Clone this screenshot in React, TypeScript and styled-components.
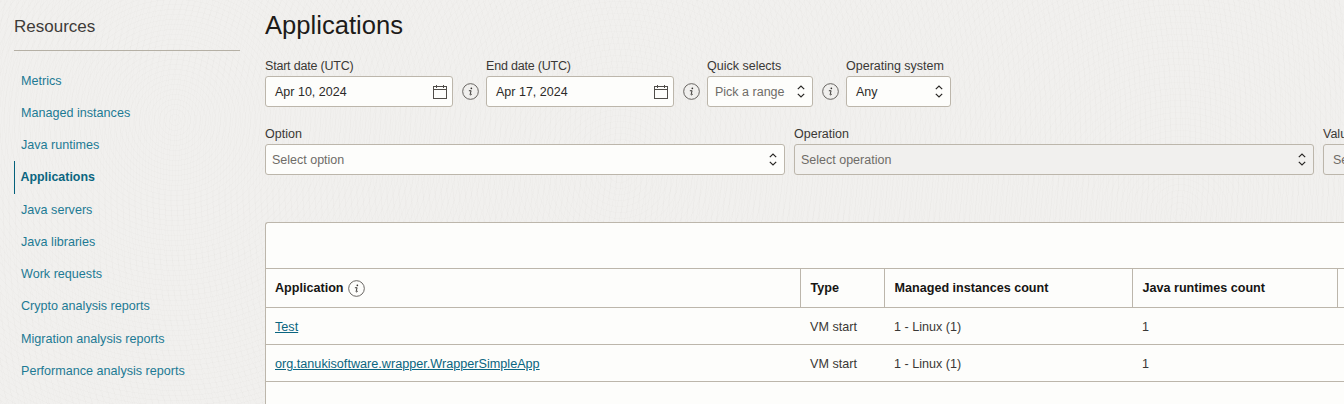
import React from 'react';
import styled, { createGlobalStyle } from 'styled-components';

const GlobalStyle = createGlobalStyle`
  html, body {
    margin: 0;
    padding: 0;
    width: 1344px;
    height: 404px;
    overflow: hidden;
    background: #f1f0ee;
    font-family: "Liberation Sans", Arial, sans-serif;
    color: #161513;
  }
  * { box-sizing: border-box; }
`;

const Page = styled.div`
  display: flex;
  width: 1344px;
  height: 404px;
  overflow: hidden;
  background-color: #f1f0ee;
  background-image:
    repeating-radial-gradient(circle at 175px 120px, rgba(120, 110, 100, 0.018) 0 1px, transparent 1px 5px),
    repeating-radial-gradient(circle at 620px 170px, rgba(120, 110, 100, 0.014) 0 1px, transparent 1px 6px),
    repeating-radial-gradient(circle at 1180px 215px, rgba(120, 110, 100, 0.014) 0 1px, transparent 1px 6px);
`;

const Sidebar = styled.aside`
  flex: 0 0 226px;
  margin-left: 14px;
`;

const SideTitle = styled.h2`
  margin: 0;
  height: 51px;
  padding-top: 16px;
  border-bottom: 1px solid #b5b0a5;
  font-size: 17px;
  line-height: 21px;
  font-weight: 400;
  color: #3d3b38;
`;

const SideNav = styled.nav`
  display: flex;
  flex-direction: column;
  margin-top: 13.5px;
`;

const SideLink = styled.a<{ $active?: boolean }>`
  display: flex;
  align-items: center;
  height: 32.25px;
  padding-left: ${(p) => (p.$active ? '5.5px' : '7px')};
  border-left: ${(p) => (p.$active ? '1.5px solid #04617b' : 'none')};
  font-size: ${(p) => (p.$active ? '12.4px' : '12.6px')};
  font-weight: ${(p) => (p.$active ? 700 : 400)};
  color: ${(p) => (p.$active ? '#0a6580' : '#1d7a94')};
`;

const Main = styled.main`
  flex: 0 0 auto;
  width: 1200px;
  margin-left: 25px;
`;

const PageTitle = styled.h1`
  margin: 0;
  padding-top: 11px;
  font-size: 25.6px;
  line-height: 28px;
  font-weight: 400;
  color: #1d1b19;
`;

const FilterRow = styled.div<{ $top: number }>`
  display: flex;
  align-items: flex-end;
  margin-top: ${(p) => p.$top}px;
`;

const Field = styled.div<{ $width: number; $gap?: number }>`
  flex: 0 0 ${(p) => p.$width}px;
  margin-right: ${(p) => p.$gap ?? 0}px;
`;

const Label = styled.label<{ $tight?: boolean }>`
  display: block;
  height: 17px;
  font-size: 12.5px;
  line-height: 14px;
  letter-spacing: ${(p) => (p.$tight ? '-0.2px' : '0')};
  color: #3a3835;
  white-space: nowrap;
`;

const Control = styled.div<{ $disabled?: boolean; $pad?: number; $right?: number }>`
  display: flex;
  align-items: center;
  justify-content: space-between;
  height: 31px;
  padding: 0 ${(p) => p.$right ?? 7}px 0 ${(p) => p.$pad ?? 9}px;
  border: 1px solid #bcb6ab;
  border-radius: 3px;
  background: ${(p) => (p.$disabled ? '#f1f0ee' : '#fdfdfb')};
  font-size: 12.5px;
  color: #2c2a28;
  white-space: nowrap;
  overflow: hidden;
`;

const Placeholder = styled.span`
  color: #6f6c67;
  font-size: 12.5px;
`;

const InfoSlot = styled.div<{ $width: number }>`
  flex: 0 0 ${(p) => p.$width}px;
  height: 31px;
  padding-left: 2px;
  display: flex;
  align-items: center;
  justify-content: center;
`;

const TableCard = styled.div`
  margin-top: 47px;
  height: 190px;
  background: #fdfdfb;
  border: 1px solid #bcb6ab;
  border-right: none;
  border-bottom: none;
  border-top-left-radius: 3px;
`;

const Toolbar = styled.div`
  height: 45px;
`;

const Table = styled.table`
  table-layout: fixed;
  width: 1099px;
  border-collapse: collapse;
  font-size: 12.6px;
`;

const HeadCell = styled.th<{ $width: number }>`
  width: ${(p) => p.$width}px;
  height: 39px;
  padding: 0 9px;
  border-top: 1px solid #bcb6ab;
  border-bottom: 1px solid #bcb6ab;
  border-right: 1px solid #bcb6ab;
  text-align: left;
  font-weight: 700;
  color: #161513;
  white-space: nowrap;

  & + & {
    padding-left: 10px;
  }
`;

const HeadInner = styled.span`
  display: inline-flex;
  align-items: center;
  gap: 4px;
`;

const BodyCell = styled.td`
  height: 37px;
  padding: 1.5px 9px 0;
  border-bottom: 1px solid #bcb6ab;
  color: #3a3835;
  white-space: nowrap;

  & + & {
    padding-left: 10px;
  }
`;

const AppLink = styled.a`
  color: #0a6580;
  text-decoration: underline;
  font-size: 12.65px;
`;

const InfoIcon = ({ size = 17 }: { size?: number }) => (
  <svg width={size} height={size} viewBox="0 0 18 18" fill="none">
    <circle cx="9" cy="9" r="8.3" stroke="#4f4c48" strokeWidth="0.9" />
    <circle cx="9.9" cy="5.6" r="0.9" fill="#33312e" />
    <path d="M7.7 8.2h1.9l-1 4c-.1.6.4.7 1.5-.2" stroke="#33312e" strokeWidth="1" strokeLinecap="round" strokeLinejoin="round" />
  </svg>
);

const CalendarIcon = () => (
  <svg width="14" height="14" viewBox="0 0 14 14" fill="none" stroke="#4f4c48" strokeWidth="1">
    <rect x="0.5" y="1.5" width="13" height="12" />
    <path d="M0.5 4.5h13M3.5 0v3M10.5 0v3" />
  </svg>
);

const UpDownIcon = () => (
  <svg width="8" height="13" viewBox="0 0 8 13" fill="none" stroke="#2c2a28" strokeWidth="1.2">
    <path d="M0.8 4.2 4 1l3.2 3.2M0.8 8.8 4 12l3.2-3.2" />
  </svg>
);

const links = [
  'Metrics',
  'Managed instances',
  'Java runtimes',
  'Applications',
  'Java servers',
  'Java libraries',
  'Work requests',
  'Crypto analysis reports',
  'Migration analysis reports',
  'Performance analysis reports',
];

const rows = [
  { name: 'Test', type: 'VM start', instances: '1 - Linux (1)', runtimes: '1' },
  { name: 'org.tanukisoftware.wrapper.WrapperSimpleApp', type: 'VM start', instances: '1 - Linux (1)', runtimes: '1' },
];

export default function App() {
  return (
    <>
      <GlobalStyle />
      <Page>
        <Sidebar>
          <SideTitle>Resources</SideTitle>
          <SideNav>
            {links.map((l) => (
              <SideLink key={l} $active={l === 'Applications'}>{l}</SideLink>
            ))}
          </SideNav>
        </Sidebar>
        <Main>
          <PageTitle>Applications</PageTitle>
          <FilterRow $top={20}>
            <Field $width={188}>
              <Label $tight>Start date (UTC)</Label>
              <Control $right={5}><span>Apr 10, 2024</span><CalendarIcon /></Control>
            </Field>
            <InfoSlot $width={33}><InfoIcon /></InfoSlot>
            <Field $width={188}>
              <Label $tight>End date (UTC)</Label>
              <Control $right={5}><span>Apr 17, 2024</span><CalendarIcon /></Control>
            </Field>
            <InfoSlot $width={33}><InfoIcon /></InfoSlot>
            <Field $width={106}>
              <Label>Quick selects</Label>
              <Control $pad={7}><Placeholder>Pick a range</Placeholder><UpDownIcon /></Control>
            </Field>
            <InfoSlot $width={33}><InfoIcon /></InfoSlot>
            <Field $width={105}>
              <Label>Operating system</Label>
              <Control><span>Any</span><UpDownIcon /></Control>
            </Field>
          </FilterRow>
          <FilterRow $top={20}>
            <Field $width={520} $gap={9}>
              <Label>Option</Label>
              <Control $pad={6}><Placeholder>Select option</Placeholder><UpDownIcon /></Control>
            </Field>
            <Field $width={520} $gap={9}>
              <Label>Operation</Label>
              <Control $pad={6} $disabled><Placeholder>Select operation</Placeholder><UpDownIcon /></Control>
            </Field>
            <Field $width={120}>
              <Label>Value</Label>
              <Control $pad={9} $disabled><Placeholder>Select value</Placeholder></Control>
            </Field>
          </FilterRow>
          <TableCard>
            <Toolbar />
            <Table>
              <thead>
                <tr>
                  <HeadCell $width={534}><HeadInner>Application <InfoIcon /></HeadInner></HeadCell>
                  <HeadCell $width={84}>Type</HeadCell>
                  <HeadCell $width={248}>Managed instances count</HeadCell>
                  <HeadCell $width={205}>Java runtimes count</HeadCell>
                  <HeadCell $width={28} />
                </tr>
              </thead>
              <tbody>
                {rows.map((r) => (
                  <tr key={r.name}>
                    <BodyCell><AppLink>{r.name}</AppLink></BodyCell>
                    <BodyCell>{r.type}</BodyCell>
                    <BodyCell>{r.instances}</BodyCell>
                    <BodyCell>{r.runtimes}</BodyCell>
                    <BodyCell />
                  </tr>
                ))}
              </tbody>
            </Table>
          </TableCard>
        </Main>
      </Page>
    </>
  );
}
